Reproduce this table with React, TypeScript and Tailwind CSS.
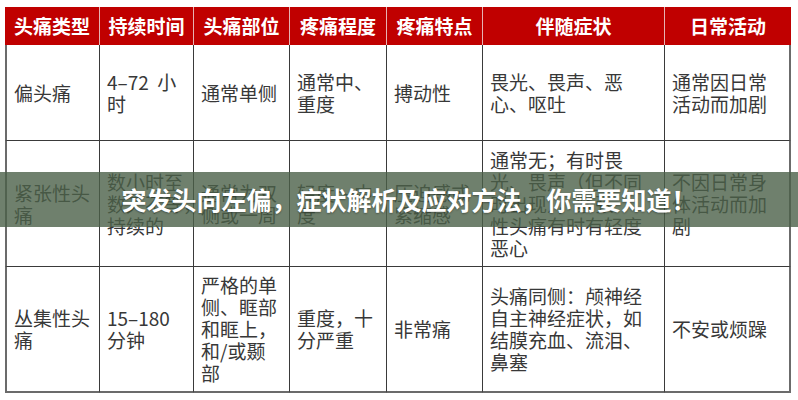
import { Fragment } from 'react';

const headers = ['头痛类型', '持续时间', '头痛部位', '疼痛程度', '疼痛特点', '伴随症状', '日常活动'];

const rows: { h: string; cells: string[][] }[] = [
  {
    h: 'h-[96px]',
    cells: [
      ['偏头痛'],
      ['4–72  小', '时'],
      ['通常单侧'],
      ['通常中、', '重度'],
      ['搏动性'],
      ['畏光、畏声、恶', '心、呕吐'],
      ['通常因日常', '活动而加剧'],
    ],
  },
  {
    h: 'h-[126px]',
    cells: [
      ['紧张性头', '痛'],
      ['数小时至', '数天不等，', '持续的'],
      ['通常为双', '侧或一周'],
      ['轻度～中', '度'],
      ['压迫感或', '紧缩感'],
      ['通常无；有时畏', '光、畏声（但不同', '时出现），紧张', '性头痛有时有轻度', '恶心'],
      ['不因日常身', '体活动而加', '剧'],
    ],
  },
  {
    h: 'h-[126px]',
    cells: [
      ['丛集性头', '痛'],
      ['15–180', '分钟'],
      ['严格的单', '侧、眶部', '和眶上，', '和/或颞', '部'],
      ['重度，十', '分严重'],
      ['非常痛'],
      ['头痛同侧：颅神经', '自主神经症状，如', '结膜充血、流泪、', '鼻塞'],
      ['不安或烦躁'],
    ],
  },
];

export default function App() {
  return (
    <div className="relative w-[798px] h-[400px] overflow-hidden bg-white font-['Noto_Sans_CJK_SC','Noto_Sans',sans-serif]">
      <div className="pt-[7px] pl-[5px]">
        <div className="grid w-[786px] grid-cols-[95px_94px_96px_97px_96px_182px_126px]">
          {headers.map((t, i) => (
            <div
              key={t}
              className={`h-[38px] flex items-center justify-center bg-[#c00000] text-white font-bold text-[19px] ${
                i < headers.length - 1 ? 'border-r border-[#e6b3b3]' : ''
              }`}
            >
              {t}
            </div>
          ))}
          {rows.map((row, ri) => (
            <Fragment key={ri}>
              {row.cells.map((lines, ci) => (
                <div
                  key={ci}
                  className={`${row.h} flex items-center px-[7px] border-r border-b border-[#3a3a3a] text-[19px] leading-[22px] text-[#383838] ${
                    ci === 0 ? 'border-l-2 border-l-[#6b6b6b]' : ''
                  } ${ci === 6 ? 'border-r-2 border-r-[#6b6b6b]' : ''} ${
                    ri === 2 ? 'border-b-2 border-b-[#6b6b6b]' : ''
                  } ${ri === 2 && ci === 2 ? 'leading-[19px]' : ''}`}
                >
                  <div className="whitespace-pre">
                    {lines.map((l, li) => (
                      <div key={li}>{l}</div>
                    ))}
                  </div>
                </div>
              ))}
            </Fragment>
          ))}
        </div>
      </div>

      {/* title band over the table */}
      <div className="absolute left-0 right-0 top-[172px] h-[55px] bg-[#4b6048]/80 flex items-center justify-center pl-[20px]">
        <span className="text-white font-bold text-[25px] [text-shadow:0_1px_2px_rgba(0,0,0,0.35)]">
          突发头向左偏，症状解析及应对方法，你需要知道！
        </span>
      </div>
    </div>
  );
}
